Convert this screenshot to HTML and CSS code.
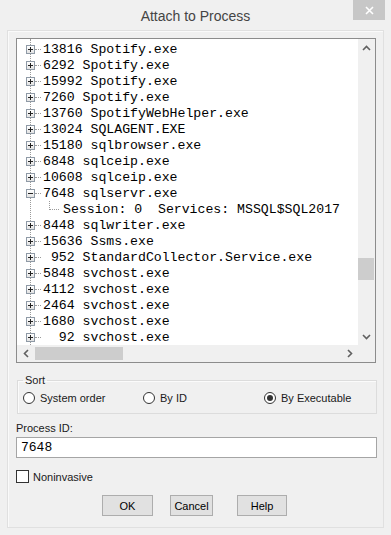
FILE: index.html
```html
<!DOCTYPE html>
<html lang="en">
<head>
    <meta charset="UTF-8">
    <meta name="viewport" content="width=device-width, initial-scale=1.0">
    <title>Attach to Process</title>
    <link rel="stylesheet" href="styles.css">
</head>
<body>
    <div class="titlebar">
        <span></span>
        <div class="title">Attach to Process</div>
        <div class="close">
            <svg width="9" height="9" viewBox="0 0 9 9"><path d="M1 1L8 8M8 1L1 8" stroke="#fff" stroke-width="1.6"/></svg>
        </div>
    </div>
    <div class="panel">
        <div class="listbox">
            <div class="tree">
                <div class="node"><span class="exp plus"></span><span class="dash"></span>13816 Spotify.exe</div>
                <div class="node"><span class="exp plus"></span><span class="dash"></span>6292 Spotify.exe</div>
                <div class="node"><span class="exp plus"></span><span class="dash"></span>15992 Spotify.exe</div>
                <div class="node"><span class="exp plus"></span><span class="dash"></span>7260 Spotify.exe</div>
                <div class="node"><span class="exp plus"></span><span class="dash"></span>13760 SpotifyWebHelper.exe</div>
                <div class="node"><span class="exp plus"></span><span class="dash"></span>13024 SQLAGENT.EXE</div>
                <div class="node"><span class="exp plus"></span><span class="dash"></span>15180 sqlbrowser.exe</div>
                <div class="node"><span class="exp plus"></span><span class="dash"></span>6848 sqlceip.exe</div>
                <div class="node"><span class="exp plus"></span><span class="dash"></span>10608 sqlceip.exe</div>
                <div class="node"><span class="exp"></span><span class="dash"></span>7648 sqlservr.exe</div>
                <div class="node child"><span class="elbow"></span>Session: 0  Services: MSSQL$SQL2017</div>
                <div class="node"><span class="exp plus"></span><span class="dash"></span>8448 sqlwriter.exe</div>
                <div class="node"><span class="exp plus"></span><span class="dash"></span>15636 Ssms.exe</div>
                <div class="node"><span class="exp plus"></span><span class="dash"></span> 952 StandardCollector.Service.exe</div>
                <div class="node"><span class="exp plus"></span><span class="dash"></span>5848 svchost.exe</div>
                <div class="node"><span class="exp plus"></span><span class="dash"></span>4112 svchost.exe</div>
                <div class="node"><span class="exp plus"></span><span class="dash"></span>2464 svchost.exe</div>
                <div class="node"><span class="exp plus"></span><span class="dash"></span>1680 svchost.exe</div>
                <div class="node"><span class="exp plus"></span><span class="dash"></span>  92 svchost.exe</div>
            </div>
            <div class="vscroll">
                <div class="arrow"><svg width="9" height="6" viewBox="0 0 9 6"><path d="M1 5L4.5 1.5L8 5" fill="none" stroke="#606060" stroke-width="1.6"/></svg></div>
                <div class="vtrack"><div class="vthumb"></div></div>
                <div class="arrow"><svg width="9" height="6" viewBox="0 0 9 6"><path d="M1 1L4.5 4.5L8 1" fill="none" stroke="#606060" stroke-width="1.6"/></svg></div>
            </div>
            <div class="hscroll">
                <div class="arrow"><svg width="6" height="9" viewBox="0 0 6 9"><path d="M5 1L1.5 4.5L5 8" fill="none" stroke="#606060" stroke-width="1.6"/></svg></div>
                <div class="htrack"><div class="hthumb"></div></div>
                <div class="arrow"><svg width="6" height="9" viewBox="0 0 6 9"><path d="M1 1L4.5 4.5L1 8" fill="none" stroke="#606060" stroke-width="1.6"/></svg></div>
            </div>
            <div class="corner"></div>
        </div>

        <fieldset class="sort">
            <legend>Sort</legend>
            <div class="radios">
                <div class="radio"><span class="dot"></span>System order</div>
                <div class="radio"><span class="dot"></span>By ID</div>
                <div class="radio"><span class="dot checked"></span>By Executable</div>
            </div>
        </fieldset>

        <div class="label">Process ID:</div>
        <input class="pid" type="text" value="7648" readonly>

        <div class="check"><span class="box"></span>Noninvasive</div>

        <div class="buttons">
            <button class="ok">OK</button>
            <button class="cancel">Cancel</button>
            <button class="help">Help</button>
        </div>
    </div>
</body>
</html>
```

FILE: styles.css
```css
body {
    margin: 0;
    width: 391px;
    height: 535px;
    overflow: hidden;
    background: #f0f0f0;
    font-family: "Liberation Sans", Arial, sans-serif;
    font-size: 11px;
    color: #1a1a1a;
}
.titlebar {
    display: grid;
    grid-template-columns: 1fr auto 1fr;
    height: 30px;
}
.title {
    font-size: 14px;
    line-height: 16px;
    margin-top: 8px;
    color: #444;
}
.close {
    justify-self: end;
    width: 32px;
    height: 20px;
    margin-right: 6px;
    background: #c7c7c7;
    display: flex;
    align-items: center;
    justify-content: center;
}
.panel {
    margin: 0 7px;
    height: 498px;
    box-sizing: border-box;
    border: 1px solid #e0e0e0;
    box-shadow: inset 1px 1px #fafafa;
    padding: 7px 0 0 8px;
}
.listbox {
    width: 360px;
    height: 325px;
    box-sizing: border-box;
    border: 1px solid #8c8c8c;
    background: #fff;
    display: grid;
    grid-template-columns: 341px 17px;
    grid-template-rows: 306px 17px;
}
.tree {
    position: relative;
    overflow: hidden;
    padding-top: 2px;
    font-family: "Liberation Mono", "Courier New", monospace;
    font-size: 13.2px;
    color: #000;
}
.tree::before {
    content: "";
    position: absolute;
    left: 13px;
    top: 0;
    bottom: 0;
    border-left: 1px dotted #9a9a9a;
}
.node {
    display: flex;
    align-items: center;
    height: 16px;
    padding-left: 9px;
    white-space: pre;
}
.exp {
    position: relative;
    z-index: 1;
    width: 9px;
    height: 9px;
    box-sizing: border-box;
    border: 1px solid #8f9aa6;
    background: linear-gradient(#fff, #e2e2e2);
}
.exp::before {
    content: "";
    position: absolute;
    left: 1px;
    top: 3px;
    width: 5px;
    height: 1px;
    background: #222;
}
.exp.plus::after {
    content: "";
    position: absolute;
    left: 3px;
    top: 1px;
    width: 1px;
    height: 5px;
    background: #222;
}
.dash {
    width: 6px;
    margin-right: 2px;
    border-top: 1px dotted #9a9a9a;
}
.child {
    padding-left: 32px;
}
.elbow {
    align-self: flex-start;
    width: 9px;
    height: 8px;
    margin-right: 4px;
    border-left: 1px dotted #9a9a9a;
    border-bottom: 1px dotted #9a9a9a;
}
.vscroll {
    background: #f0f0f0;
    display: flex;
    flex-direction: column;
}
.hscroll {
    background: #f0f0f0;
    display: flex;
}
.corner {
    background: #f0f0f0;
}
.arrow {
    flex: 0 0 17px;
    display: flex;
    align-items: center;
    justify-content: center;
}
.vtrack {
    flex: 1;
    padding-top: 202px;
}
.vthumb {
    height: 22px;
    margin-right: 1px;
    background: #cdcdcd;
}
.htrack {
    flex: 1;
    padding: 2px 0 2px 1px;
}
.hthumb {
    width: 88px;
    height: 13px;
    background: #cdcdcd;
}
.sort {
    margin: 11px 0 0 1px;
    width: 360px;
    box-sizing: border-box;
    border: 1px solid #dcdcdc;
    box-shadow: inset 1px 1px #fbfbfb;
    padding: 4px 0 8px 5px;
}
.sort legend {
    padding: 0 2px;
    line-height: 13px;
}
.radios {
    display: grid;
    grid-template-columns: 120px 121px 1fr;
}
.radio {
    display: flex;
    align-items: center;
    gap: 5px;
    height: 14px;
}
.dot {
    width: 12px;
    height: 12px;
    box-sizing: border-box;
    border: 1px solid #333;
    border-radius: 50%;
    background: #fff;
    display: flex;
    align-items: center;
    justify-content: center;
}
.dot.checked::after {
    content: "";
    width: 6px;
    height: 6px;
    border-radius: 50%;
    background: #333;
}
.label {
    margin-top: 8px;
    line-height: 13px;
}
.pid {
    display: block;
    margin: 2px 0 0 0;
    width: 361px;
    height: 21px;
    box-sizing: border-box;
    border: 1px solid #a5a5a5;
    padding: 0 4px;
    font-family: "Liberation Mono", "Courier New", monospace;
    font-size: 13px;
    color: #000;
    background: #fff;
    outline: none;
}
.check {
    display: flex;
    align-items: center;
    gap: 4px;
    margin-top: 12px;
    height: 13px;
}
.box {
    width: 13px;
    height: 13px;
    box-sizing: border-box;
    border: 1px solid #333;
    background: #fff;
}
.buttons {
    display: flex;
    margin: 12px 0 0 86px;
}
.buttons button {
    height: 21px;
    box-sizing: border-box;
    border: 1px solid #adadad;
    background: #e1e1e1;
    font-family: "Liberation Sans", Arial, sans-serif;
    font-size: 11px;
    color: #000;
    padding: 0;
}
.ok {
    width: 51px;
}
.cancel {
    width: 43px;
    margin-left: 17px;
}
.help {
    width: 50px;
    margin-left: 24px;
}
```
